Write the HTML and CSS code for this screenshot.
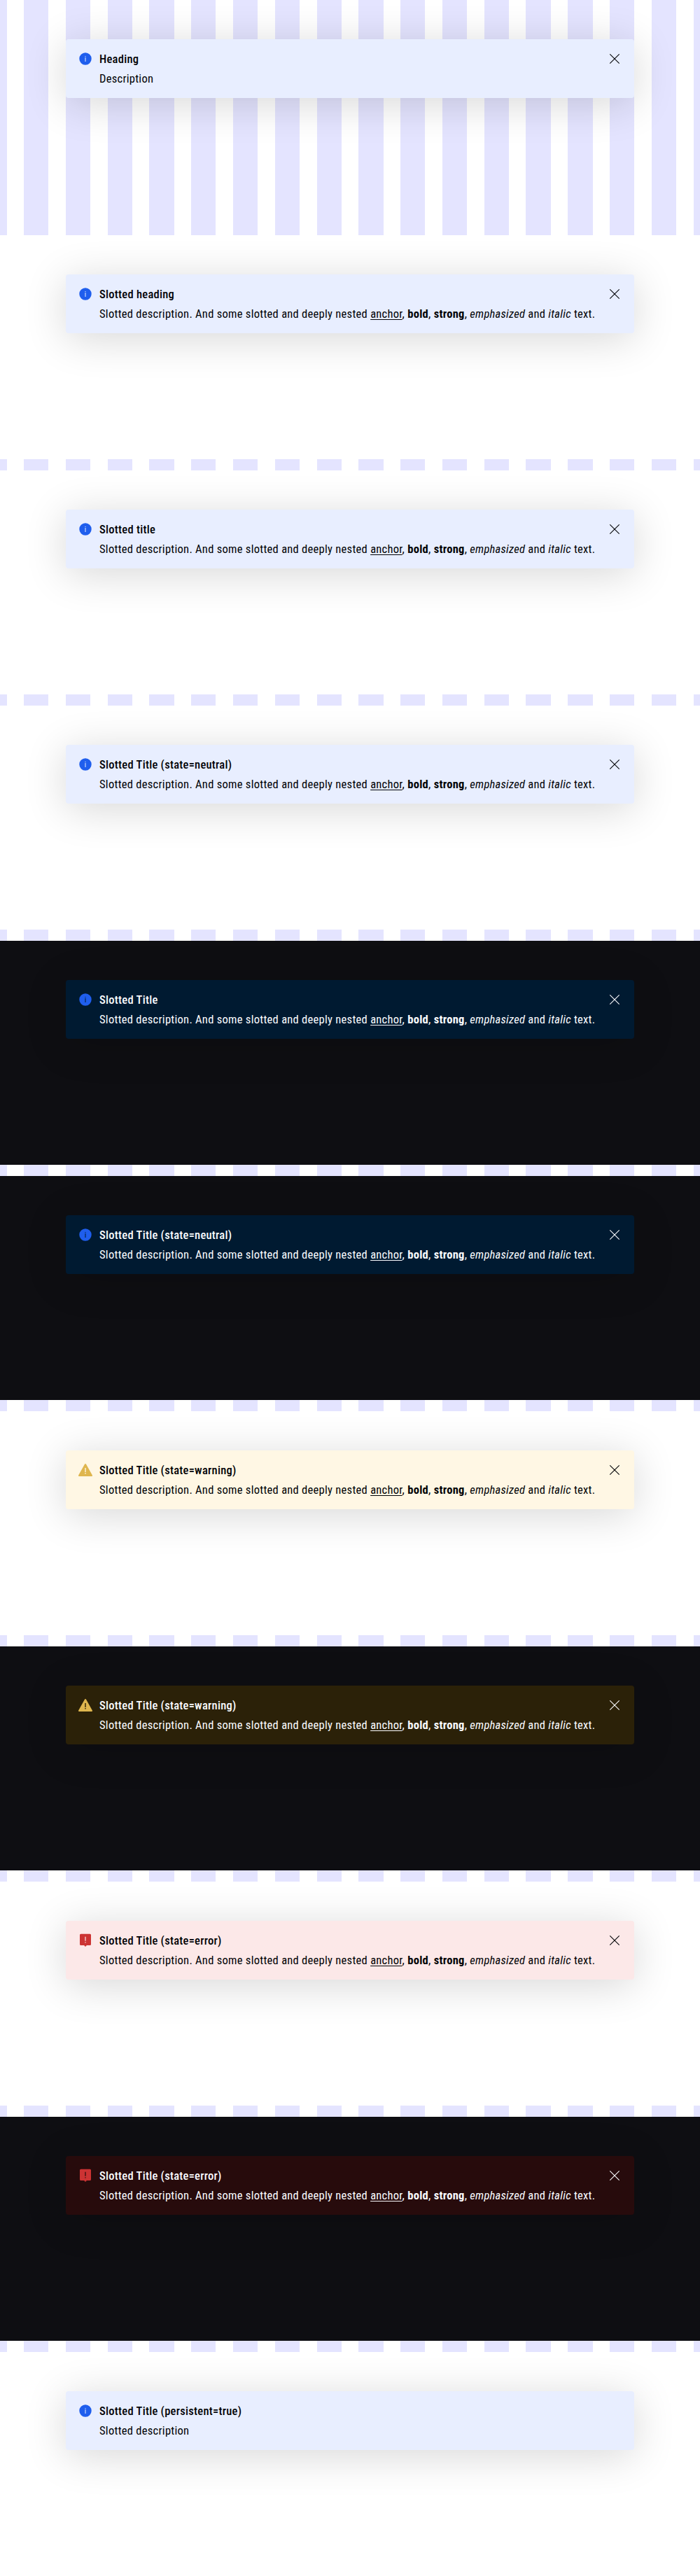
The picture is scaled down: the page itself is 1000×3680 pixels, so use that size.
FILE: index.html
```html
<!DOCTYPE html>
<html lang="en">
<head><meta charset="utf-8"><title>Banner</title><link rel="stylesheet" href="styles.css"></head>
<body>
<svg class="defs" aria-hidden="true">
<symbol id="info" viewBox="0 0 24 24"><path fill-rule="evenodd" d="M12 3.3a8.7 8.7 0 1 0 0 17.4 8.7 8.7 0 0 0 0-17.4zM11.5 8h1v1.1h-1zm0 2.1h1V16h-1z"/></symbol>
<symbol id="warning" viewBox="0 0 24 24"><path fill-rule="evenodd" d="M11.1 3.5q.9-1.1 1.8 0l9 16q.5 1.3-.7 1.5H2.8q-1.2-.2-.7-1.5zM11.3 9.1h1.4V15h-1.4zm0 7h1.4v1.5h-1.4z"/></symbol>
<symbol id="error" viewBox="0 0 24 24"><path fill-rule="evenodd" d="M5.5 2.7h13Q20 2.7 20 4.2v13.4q0 1.5-1.5 1.5h-4.6L12 21l-1.9-1.9H5.5Q4 19.1 4 17.6V4.2q0-1.5 1.5-1.5zM11.4 6.8h1.2v6h-1.2zm0 7.4h1.2v1.4h-1.2z"/></symbol>
<symbol id="close" viewBox="0 0 24 24"><path d="M5.3 5.3l13.4 13.4M18.7 5.3L5.3 18.7"/></symbol>
</svg>
<main class="page">
<section class="stage clear"><div class="banner info"><svg class="icon"><use href="#info"/></svg><div class="content"><h5>Heading</h5><p>Description</p></div><button class="close" aria-label="Close"><svg><use href="#close"/></svg></button></div></section>
<section class="stage"><div class="banner info"><svg class="icon"><use href="#info"/></svg><div class="content"><h5>Slotted heading</h5><p>Slotted description. And some slotted and deeply nested <a href="#">anchor</a>, <b>bold</b>, <strong>strong</strong>, <em>emphasized</em> and <i>italic</i> text.</p></div><button class="close" aria-label="Close"><svg><use href="#close"/></svg></button></div></section>
<section class="stage"><div class="banner info"><svg class="icon"><use href="#info"/></svg><div class="content"><h5>Slotted title</h5><p>Slotted description. And some slotted and deeply nested <a href="#">anchor</a>, <b>bold</b>, <strong>strong</strong>, <em>emphasized</em> and <i>italic</i> text.</p></div><button class="close" aria-label="Close"><svg><use href="#close"/></svg></button></div></section>
<section class="stage"><div class="banner info"><svg class="icon"><use href="#info"/></svg><div class="content"><h5>Slotted Title (state=neutral)</h5><p>Slotted description. And some slotted and deeply nested <a href="#">anchor</a>, <b>bold</b>, <strong>strong</strong>, <em>emphasized</em> and <i>italic</i> text.</p></div><button class="close" aria-label="Close"><svg><use href="#close"/></svg></button></div></section>
<section class="stage dark"><div class="banner info"><svg class="icon"><use href="#info"/></svg><div class="content"><h5>Slotted Title</h5><p>Slotted description. And some slotted and deeply nested <a href="#">anchor</a>, <b>bold</b>, <strong>strong</strong>, <em>emphasized</em> and <i>italic</i> text.</p></div><button class="close" aria-label="Close"><svg><use href="#close"/></svg></button></div></section>
<section class="stage dark"><div class="banner info"><svg class="icon"><use href="#info"/></svg><div class="content"><h5>Slotted Title (state=neutral)</h5><p>Slotted description. And some slotted and deeply nested <a href="#">anchor</a>, <b>bold</b>, <strong>strong</strong>, <em>emphasized</em> and <i>italic</i> text.</p></div><button class="close" aria-label="Close"><svg><use href="#close"/></svg></button></div></section>
<section class="stage"><div class="banner warning"><svg class="icon"><use href="#warning"/></svg><div class="content"><h5>Slotted Title (state=warning)</h5><p>Slotted description. And some slotted and deeply nested <a href="#">anchor</a>, <b>bold</b>, <strong>strong</strong>, <em>emphasized</em> and <i>italic</i> text.</p></div><button class="close" aria-label="Close"><svg><use href="#close"/></svg></button></div></section>
<section class="stage dark"><div class="banner warning"><svg class="icon"><use href="#warning"/></svg><div class="content"><h5>Slotted Title (state=warning)</h5><p>Slotted description. And some slotted and deeply nested <a href="#">anchor</a>, <b>bold</b>, <strong>strong</strong>, <em>emphasized</em> and <i>italic</i> text.</p></div><button class="close" aria-label="Close"><svg><use href="#close"/></svg></button></div></section>
<section class="stage"><div class="banner error"><svg class="icon"><use href="#error"/></svg><div class="content"><h5>Slotted Title (state=error)</h5><p>Slotted description. And some slotted and deeply nested <a href="#">anchor</a>, <b>bold</b>, <strong>strong</strong>, <em>emphasized</em> and <i>italic</i> text.</p></div><button class="close" aria-label="Close"><svg><use href="#close"/></svg></button></div></section>
<section class="stage dark"><div class="banner error"><svg class="icon"><use href="#error"/></svg><div class="content"><h5>Slotted Title (state=error)</h5><p>Slotted description. And some slotted and deeply nested <a href="#">anchor</a>, <b>bold</b>, <strong>strong</strong>, <em>emphasized</em> and <i>italic</i> text.</p></div><button class="close" aria-label="Close"><svg><use href="#close"/></svg></button></div></section>
<section class="stage"><div class="banner info"><svg class="icon"><use href="#info"/></svg><div class="content"><h5>Slotted Title (persistent=true)</h5><p>Slotted description</p></div></div></section>
</main>
</body>
</html>
```
FILE: styles.css
```css
body {
  margin: 0;
  color: #010205;
  font: 16.5px/24px Roboto, "Liberation Sans", sans-serif;
  font-stretch: 75%;
  letter-spacing: .28px;
}
.defs { position: absolute; width: 0; height: 0; }
/* Grid columns shown behind the stages */
.page {
  display: flex;
  flex-direction: column;
  gap: 16px;
  background:
    linear-gradient(90deg, #e4e4ff 10px, transparent 10px),
    repeating-linear-gradient(90deg, #e4e4ff 0 35.27px, #fff 35.27px 59.79px) 33.93px 0 / 100% 100% no-repeat,
    #fff;
}
.stage {
  box-sizing: border-box;
  height: 320px;
  padding: 56px 94px 0;
  background: #fff;
}
.stage.clear { background: none; }
.banner {
  display: flex;
  gap: 8px;
  box-sizing: border-box;
  height: 84px;
  padding: 16px;
  border-radius: 4px;
  box-shadow: 0 8px 60px rgba(0, 0, 0, .16);
}
.icon { flex: none; width: 24px; height: 24px; }
.content { flex: 1; padding-top: 1px; white-space: nowrap; }
h5, p { margin: 0; font-size: inherit; line-height: 24px; }
h5 { margin-bottom: 4px; font-weight: 500; }
a { color: inherit; text-decoration: underline; text-underline-offset: 2px; }
.close {
  flex: none;
  width: 24px;
  height: 24px;
  padding: 0;
  border: 0;
  background: none;
  color: inherit;
}
.close svg { display: block; width: 24px; height: 24px; fill: none; stroke: currentColor; stroke-width: 1.1; }
.info { background: #e8eeff; }
.warning { background: #fff7e4; }
.error { background: #fce8e8; }
.info .icon { fill: #1f5eed; }
.warning .icon { fill: #dfb64e; }
.error .icon { fill: #cc3333; }
.dark { background: #0e0e12; color: #fbfcff; }
.dark .info { background: #001a31; }
.dark .warning { background: #2b2108; }
.dark .error { background: #270b0c; }
```
